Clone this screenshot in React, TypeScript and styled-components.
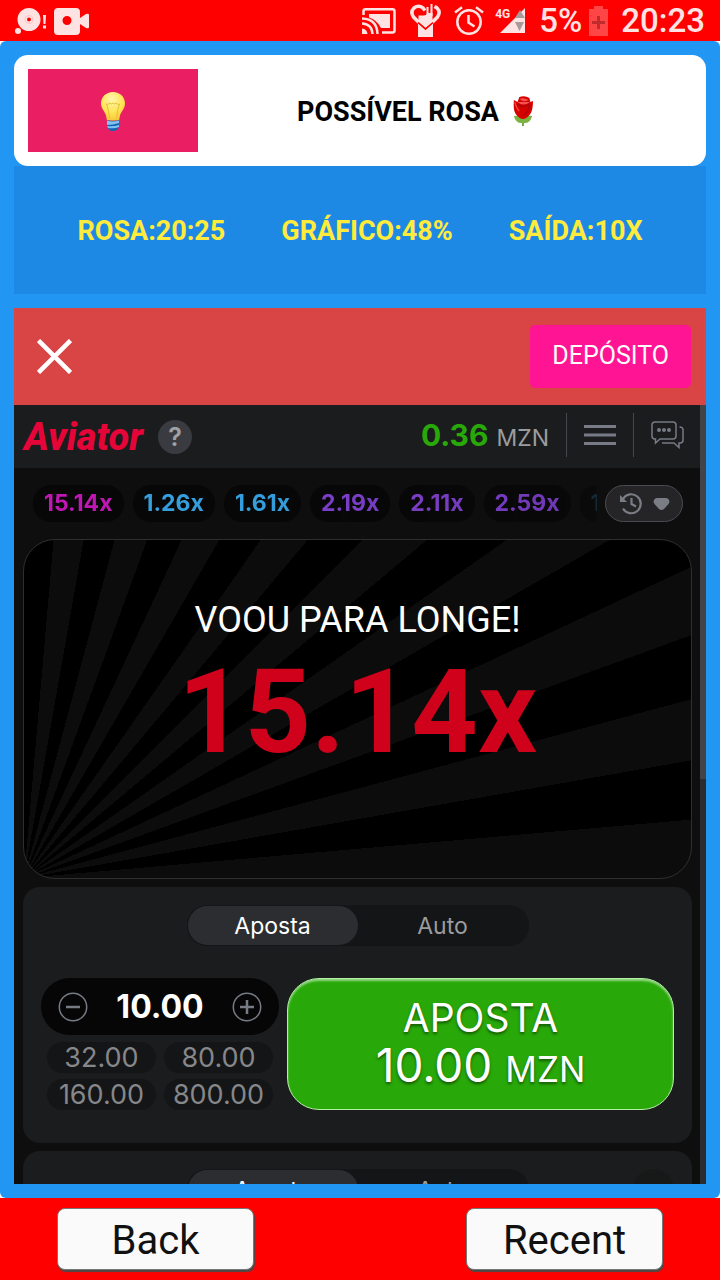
import React, { useState } from "react";
import styled, { createGlobalStyle } from "styled-components";

const GlobalStyle = createGlobalStyle`
  *, *::before, *::after { box-sizing: border-box; }
  body { margin: 0; background: #fff; font-family: Roboto, sans-serif; }
  button, input { font: inherit; color: inherit; border: 0; margin: 0; padding: 0; background: none; }
  button { cursor: pointer; }
  svg { display: block; flex: none; }
`;

const ui = "Inter, 'Noto Sans', sans-serif";

const Screen = styled.div`
  display: flex;
  flex-direction: column;
  height: 100vh;
  overflow: hidden;
`;

/* ---------- status bar ---------- */

const StatusBar = styled.header`
  flex: none;
  display: flex;
  align-items: center;
  justify-content: space-between;
  height: 41px;
  padding: 0 15px;
  background: #ff0000;
  color: #ffe3e3;
`;

const StatusGroup = styled.div<{ $gap: number }>`
  display: flex;
  align-items: center;
  gap: ${(p) => p.$gap}px;
`;

const StatusText = styled.span`
  font-size: 33px;
  line-height: 40px;
  font-weight: 500;
`;

const Signal = styled.div`
  display: flex;
  position: relative;
  padding-left: 5px;
`;

const NetworkType = styled.span`
  position: absolute;
  left: 0;
  top: 0;
  font-size: 12px;
  line-height: 12px;
  font-weight: 700;
`;

/* ---------- overlay frame ---------- */

const Frame = styled.main`
  flex: 1;
  min-height: 0;
  display: flex;
  flex-direction: column;
  padding: 14px;
  border-radius: 6px;
  background: #2196f3;
`;

const TipCard = styled.section`
  flex: none;
  display: flex;
  align-items: center;
  padding: 14px;
  border-radius: 14px;
  background: #fff;
`;

const TipBadge = styled.div`
  display: flex;
  align-items: center;
  justify-content: center;
  width: 170px;
  height: 83px;
  padding-top: 2px;
  background: #e91e63;
`;

const TipTitle = styled.h1`
  flex: 1;
  display: flex;
  align-items: center;
  justify-content: center;
  gap: 14px;
  margin: 0;
  padding: 2px 60px 0 0;
  font-size: 27px;
  line-height: 32px;
  font-weight: 700;
  color: #000;
`;

const TipStats = styled.section`
  flex: none;
  display: flex;
  align-items: center;
  justify-content: center;
  gap: 56px;
  height: 128px;
  margin-bottom: 14px;
  padding-top: 2px;
  background: #1e88e5;
  color: #ffeb3b;
  font-size: 27px;
  line-height: 32px;
  font-weight: 700;
`;

const WebView = styled.section`
  flex: 1;
  min-height: 0;
  display: flex;
  flex-direction: column;
  background: #0e0e0e;
  font-family: ${ui};
`;

const SiteHeader = styled.div`
  flex: none;
  display: flex;
  align-items: center;
  justify-content: space-between;
  height: 97px;
  padding: 0 15px 0 23px;
  background: #d94444;
  color: #fff;
`;

const IconButton = styled.button`
  display: flex;
  align-items: center;
  justify-content: center;
`;

const DepositButton = styled.button`
  height: 63px;
  padding: 0 22px 2px;
  border-radius: 5px;
  background: #ff1493;
  font-family: Roboto, sans-serif;
  font-size: 25px;
  line-height: 32px;
`;

const Scroller = styled.div`
  flex: 1;
  min-height: 0;
  display: flex;
`;

const ScrollTrack = styled.div`
  width: 6px;
  background: #2b2c2f;
`;

const ScrollThumb = styled.div`
  height: 48%;
  background: #414347;
`;

const Page = styled.div`
  flex: 1;
  min-width: 0;
  overflow: hidden;
`;

/* ---------- game navigation ---------- */

const GameNav = styled.nav`
  display: flex;
  align-items: center;
  height: 63px;
  padding: 0 16px 0 10px;
  background: #1b1c1d;
`;

const Logo = styled.span`
  display: flex;
  align-items: center;
  width: 120px;
  color: #e50539;
  font-family: Roboto, sans-serif;
  font-size: 38px;
  line-height: 48px;
  font-weight: 800;
  font-style: italic;
`;

const HelpButton = styled.button`
  width: 34px;
  height: 34px;
  margin-left: 14px;
  border-radius: 50%;
  background: #3a3b40;
  color: #a0a1a4;
  font-size: 25px;
  line-height: 34px;
  font-weight: 600;
`;

const Balance = styled.div`
  display: flex;
  align-items: baseline;
  gap: 8px;
  margin-left: auto;
  color: #9b9c9e;
  font-size: 23px;
  line-height: 36px;
`;

const BalanceValue = styled.strong`
  color: #28a909;
  font-size: 30px;
  font-weight: 700;
`;

const NavItem = styled(IconButton)`
  height: 44px;
  margin: 0 0 4px 17px;
  padding-left: 17px;
  border-left: 1px solid #46474b;
  color: #767b85;
`;

/* ---------- payout history ---------- */

const History = styled.div`
  display: flex;
  align-items: center;
  gap: 8px;
  height: 71px;
  padding: 0 17px 0 19px;
`;

const Payouts = styled.ul`
  flex: 1;
  min-width: 0;
  display: flex;
  gap: 9px;
  margin: 0;
  padding: 0;
  overflow: hidden;
  list-style: none;
  mask-image: linear-gradient(to right, #000 40%, rgba(0, 0, 0, 0.75) 94%, rgba(0, 0, 0, 0.4));
`;

const Payout = styled.li<{ $color: string }>`
  flex: none;
  padding: 0 11px;
  border-radius: 18px;
  background: #070707;
  color: ${(p) => p.$color};
  font-size: 23px;
  line-height: 37px;
  font-weight: 700;
`;

const HistoryButton = styled.button`
  flex: none;
  display: flex;
  align-items: center;
  justify-content: center;
  gap: 10px;
  width: 78px;
  height: 37px;
  border: 1px solid #4a4b50;
  border-radius: 19px;
  background: #252528;
  color: #7b7d84;
`;

/* ---------- play area ---------- */

const Stack = styled.div`
  display: flex;
  flex-direction: column;
  gap: 8px;
  padding: 0 8px 0 9px;
`;

const Stage = styled.section`
  height: 340px;
  padding-top: 59px;
  border: 1px solid #2e2e30;
  border-radius: 32px;
  background: repeating-conic-gradient(from 0deg at 0 100%, #000 0deg 5deg, #0c0c0c 5deg 10deg);
  text-align: center;
  font-family: Roboto, sans-serif;
`;

const StageTitle = styled.p`
  margin: 0;
  color: #fff;
  font-size: 36px;
  line-height: 42px;
`;

const StageValue = styled.p`
  margin: 0;
  color: #d0021b;
  font-size: 116px;
  line-height: 142px;
  font-weight: 700;
`;

const BetPanel = styled.section`
  position: relative;
  height: 256px;
  padding: 18px;
  border-radius: 17px;
  background: #1b1c1d;
`;

const Tabs = styled.div`
  display: grid;
  grid-template-columns: 1fr 1fr;
  width: 342px;
  height: 41px;
  margin: 0 auto 32px;
  padding: 1px;
  border-radius: 20px;
  background: #141516;
`;

const Tab = styled.button<{ $active: boolean }>`
  padding-top: 1px;
  border-radius: 20px;
  background: ${(p) => (p.$active ? "#2c2d30" : "transparent")};
  color: ${(p) => (p.$active ? "#fff" : "#9b9c9e")};
  font-size: 23px;
  line-height: 36px;
`;

const PanelCorner = styled.button`
  position: absolute;
  top: 18px;
  right: 18px;
  width: 41px;
  height: 41px;
  border-radius: 50%;
  background: #171818;
`;

const Controls = styled.div`
  display: flex;
  gap: 8px;
  height: 132px;
`;

const StakeColumn = styled.div`
  display: flex;
  flex-direction: column;
  gap: 7px;
  flex: 0 0 238px;
`;

const Stepper = styled.div`
  display: flex;
  align-items: center;
  justify-content: space-between;
  height: 57px;
  padding: 0 17px;
  border-radius: 29px;
  background: #060606;
  color: #767b85;
`;

const StakeInput = styled.input`
  width: 110px;
  height: 44px;
  color: #fff;
  text-align: center;
  font-size: 32px;
  line-height: 44px;
  font-weight: 700;
  outline: 0;
`;

const QuickStakes = styled.div`
  flex: 1;
  display: grid;
  grid-template-columns: 1fr 1fr;
  gap: 6px 8px;
  padding: 0 6px;
`;

const QuickStake = styled.button`
  border-radius: 16px;
  background: #141516;
  color: #86878a;
  font-size: 27px;
  line-height: 31px;
  white-space: nowrap;
`;

const BetButton = styled.button`
  flex: 1;
  display: flex;
  flex-direction: column;
  align-items: center;
  justify-content: center;
  border: 1px solid #b2f2a3;
  border-radius: 32px;
  background: #28a909;
  box-shadow: inset 0 2px 2px #ffffff80;
  color: #fff;
  font-size: 39px;
  line-height: 46px;
  text-shadow: 0 2px 3px rgba(0, 0, 0, 0.5);
`;

const BetAmount = styled.span`
  font-size: 46px;
  line-height: 48px;
`;

const BetCurrency = styled.span`
  font-size: 35px;
`;

/* ---------- bottom bar ---------- */

const BottomBar = styled.footer`
  flex: none;
  display: flex;
  align-items: center;
  justify-content: space-between;
  height: 82px;
  padding: 0 57px;
  background: #ff0000;
`;

const KeyButton = styled.button`
  width: 197px;
  height: 62px;
  padding-top: 4px;
  border: 1px solid #777;
  border-radius: 8px;
  background: #fafafa;
  box-shadow: 1px 2px 1px #4a4a4a;
  color: #111;
  font-size: 40px;
  line-height: 48px;
`;

/* ---------- drawings ---------- */

const RecordIcon = () => (
  <svg width="32" height="28" viewBox="0 0 32 28" fill="currentColor">
    <path fillRule="evenodd" d="M14 1a11.500 11.500 0 1 1 0 23 11.500 11.500 0 0 1 0-23zm0 9.500a2 2 0 1 0 0 4 2 2 0 0 0 0-4z" />
    <circle cx="14" cy="12.500" r="4" fill="none" stroke="#ffc4c4" strokeWidth="1" />
    <circle cx="3" cy="24" r="3" />
    <path d="M28 8h3l-.5 9h-2zM28 18.500h3v3h-3z" />
  </svg>
);

const CameraIcon = () => (
  <svg width="35" height="28" viewBox="0 0 35 28" fill="currentColor">
    <path
      fillRule="evenodd"
      d="M4 1h18a4 4 0 0 1 4 4v6l6-4q3-1 3 1v12q0 2-3 1l-6-4v7a4 4 0 0 1-4 4H4a4 4 0 0 1-4-4V5a4 4 0 0 1 4-4zm9 8a4.500 4.500 0 1 0 0 9 4.500 4.500 0 0 0 0-9z"
    />
  </svg>
);

const CastIcon = () => (
  <svg width="34" height="26" viewBox="0 0 34 26" fill="none" stroke="currentColor" strokeWidth="2.500">
    <path d="M1.500 7V3.200Q1.500 1.300 3.500 1.300H30.500Q32.500 1.300 32.500 3.200V22.500Q32.500 24.500 30.500 24.500H20" />
    <path d="M7 6h21v14h-9Q15 12 7 9.500z" fill="currentColor" stroke="none" />
    <path d="M0 10.500Q15 11 15.500 26M0 15.500Q10 16 10.500 26" />
    <path d="M0 20.500Q5 21 5.500 26H0z" fill="currentColor" stroke="none" />
  </svg>
);

const HeartIcon = () => (
  <svg width="31" height="34" viewBox="0 0 31 34" fill="none">
    <path d="M8 19l7.500 7L23 19v14H8z" fill="currentColor" />
    <path
      d="M9 18.500L3.500 13Q0 8 4 4Q8.500 .5 13 4L15 6.500M22 18.500L27.500 13Q31 8 27 4L24.500 2.500"
      stroke="currentColor"
      strokeWidth="3.500"
    />
    <path d="M8.500 11.500h5q3 0 4-2.500h5v9.500l-7 5.500-7-6z" fill="currentColor" />
    <path d="M8 18.500l7.500 6.500 7.500-6.500" stroke="#ff0000" strokeWidth="1.500" />
    <path d="M17.500 3v8M21.500 0v12" stroke="currentColor" strokeWidth="2" />
  </svg>
);

const AlarmIcon = () => (
  <svg width="30" height="29" viewBox="0 0 30 29" fill="none" stroke="currentColor" strokeWidth="2.500">
    <circle cx="15" cy="16" r="11.700" />
    <path d="M14.500 9v7.500l6 4M1 6.500L8 1.200M29 6.500L22 1.200" />
  </svg>
);

const SignalIcon = () => (
  <svg width="26" height="26" viewBox="0 0 26 26">
    <path d="M25 0v25H0z" fill="#ffe3e3" />
    <path d="M20 2l5 8H15zM15 14h9l-4.500 9z" fill="#a99" />
  </svg>
);

const BatteryIcon = () => (
  <svg width="19" height="30" viewBox="0 0 19 30">
    <path d="M0 3h5V0h9v3h5v27H0z" fill="#ff4545" />
    <path d="M9.500 10v13M3 16.500h13" stroke="#c22b2b" strokeWidth="3" />
  </svg>
);

const BulbIcon = () => (
  <svg width="26" height="41" viewBox="0 0 26 41">
    <defs>
      <radialGradient id="bulb" cx="45%" cy="25%" r="75%">
        <stop offset="0" stopColor="#fff6b0" />
        <stop offset="0.600" stopColor="#ffe555" />
        <stop offset="1" stopColor="#f5c938" />
      </radialGradient>
    </defs>
    <path d="M13 1C6 1 1 6 1 12.500c0 5 4 8 5 12l1 5h12l1-5c1-4 5-7 5-12C25 6 20 1 13 1z" fill="url(#bulb)" />
    <path
      d="M9.500 28Q9 19 6.500 13q2 1 3.500-1 1.500 2 3 0 1.500 2 3 0 1.500 2 3.500 1Q17 19 16.500 28"
      fill="none"
      stroke="#e9bd3a"
      strokeWidth="1"
    />
    <path d="M7 29q6 2 12 0v6q-1 5-6 5t-6-5z" fill="#1565b5" />
    <path d="M7 29.500q6 2 12 0v2.500q-6 2-12 2zM7 35q6 1 12-1v2q-5 2-11 1z" fill="#83c3f0" />
  </svg>
);

const RoseIcon = () => (
  <svg width="20" height="31" viewBox="2 0 22 31" preserveAspectRatio="none">
    <path d="M12 20h2v10h-2z" fill="#689f38" />
    <path d="M13 27Q5 28 3 20q7-1 10 3 3-4 10-3-2 8-10 7z" fill="#7cb342" />
    <path d="M3 4l4 2 2-5q6-2 11 1l1 4 3-1q0 9-3 13-4 5-8 5t-8-5Q2 14 3 4z" fill="#d50000" />
    <path d="M7 6q6 5 14 0M9 3q5-2 10 1-5 3-10-1z" fill="#f8524f" />
    <path d="M7 8q6 5 13 0M20 8q-1 9-7 12" fill="none" stroke="#a80808" strokeWidth="1.300" />
    <path d="M4 6q2 7 5 9" fill="none" stroke="#f44336" strokeWidth="1.500" />
  </svg>
);

const CloseIcon = () => (
  <svg width="35" height="35" viewBox="0 0 35 35" stroke="currentColor" strokeWidth="4.500">
    <path d="M1.500 1.500l32 32M33.500 1.500l-32 32" />
  </svg>
);

const MenuIcon = () => (
  <svg width="32" height="22" viewBox="0 0 32 22" fill="currentColor">
    <path d="M0 1h32v3H0zM0 9.500h32v3H0zM0 18h32v3H0z" />
  </svg>
);

const ChatIcon = () => (
  <svg width="33" height="28" viewBox="0 0 33 28" fill="none" stroke="currentColor" strokeWidth="1.500">
    <path d="M4 1h18q3 0 3 3v11q0 3-3 3H9l-4.500 4v-4H4q-3 0-3-3V4q0-3 3-3z" />
    <path d="M28.500 6q3.500 0 3.500 3v10q0 3-3 3h-1v4.500L23 22H11" />
    <path d="M8 9h0M13 9h0M18 9h0" strokeWidth="4" strokeLinecap="round" />
  </svg>
);

const HistoryIcon = () => (
  <svg width="24" height="23" viewBox="0 0 24 23" fill="none" stroke="currentColor" strokeWidth="2.200">
    <path d="M4 7A9.500 9.500 0 1 1 4 16.500M12.500 6v6l4.500 2.500" />
    <path d="M1 3v7h7z" fill="currentColor" stroke="none" />
  </svg>
);

const DropIcon = () => (
  <svg width="17" height="14" viewBox="0 0 17 14" fill="currentColor">
    <path d="M4 1h9q2 0 3 2 1 2-.5 4L11 12q-2.500 2-5 0L1.500 7Q0 5 1 3t3-2z" />
  </svg>
);

const StepIcon = ({ plus }: { plus?: boolean }) => (
  <svg width="30" height="30" viewBox="0 0 30 30" fill="none" stroke="currentColor">
    <circle cx="15" cy="15" r="13.700" strokeWidth="1.500" />
    <path d={plus ? "M8 15h14M15 8v14" : "M8 15h14"} strokeWidth="2.500" />
  </svg>
);

/* ---------- composition ---------- */

const payouts = [
  { value: "15.14x", color: "#c017b4" },
  { value: "1.26x", color: "#349fdc" },
  { value: "1.61x", color: "#349fdc" },
  { value: "2.19x", color: "#8242d6" },
  { value: "2.11x", color: "#8a44e0" },
  { value: "2.59x", color: "#8f46ea" },
  { value: "1", color: "#1f4f69" },
];

const quickStakes = ["32.00", "80.00", "160.00", "800.00"];

function BetForm({ corner }: { corner?: boolean }) {
  const [stake, setStake] = useState("10.00");
  const [auto, setAuto] = useState(false);
  const step = (by: number) => setStake(Math.max(1, (parseFloat(stake) || 0) + by).toFixed(2));

  return (
    <BetPanel>
      <Tabs role="tablist">
        <Tab role="tab" aria-selected={!auto} $active={!auto} onClick={() => setAuto(false)}>
          Aposta
        </Tab>
        <Tab role="tab" aria-selected={auto} $active={auto} onClick={() => setAuto(true)}>
          Auto
        </Tab>
      </Tabs>
      {corner && <PanelCorner aria-label="Remover" />}
      <Controls>
        <StakeColumn>
          <Stepper>
            <IconButton aria-label="Diminuir" onClick={() => step(-1)}>
              <StepIcon />
            </IconButton>
            <StakeInput aria-label="Valor" value={stake} onChange={(e) => setStake(e.target.value)} />
            <IconButton aria-label="Aumentar" onClick={() => step(1)}>
              <StepIcon plus />
            </IconButton>
          </Stepper>
          <QuickStakes>
            {quickStakes.map((q) => (
              <QuickStake key={q} onClick={() => setStake(q)}>
                {q}
              </QuickStake>
            ))}
          </QuickStakes>
        </StakeColumn>
        <BetButton>
          <span>APOSTA</span>
          <BetAmount>
            {stake} <BetCurrency>MZN</BetCurrency>
          </BetAmount>
        </BetButton>
      </Controls>
    </BetPanel>
  );
}

export default function App() {
  return (
    <Screen>
      <GlobalStyle />
      <StatusBar>
        <StatusGroup $gap={7}>
          <RecordIcon />
          <CameraIcon />
        </StatusGroup>
        <StatusGroup $gap={13}>
          <StatusGroup $gap={14}>
            <CastIcon />
            <HeartIcon />
          </StatusGroup>
          <StatusGroup $gap={11}>
            <AlarmIcon />
            <Signal>
              <NetworkType>4G</NetworkType>
              <SignalIcon />
            </Signal>
          </StatusGroup>
          <StatusGroup $gap={7}>
            <StatusText>5%</StatusText>
            <BatteryIcon />
          </StatusGroup>
          <StatusText>20:23</StatusText>
        </StatusGroup>
      </StatusBar>

      <Frame>
        <TipCard>
          <TipBadge>
            <BulbIcon />
          </TipBadge>
          <TipTitle>
            POSSÍVEL ROSA <RoseIcon />
          </TipTitle>
        </TipCard>
        <TipStats>
          <span>ROSA:20:25</span>
          <span>GRÁFICO:48%</span>
          <span>SAÍDA:10X</span>
        </TipStats>

        <WebView>
          <SiteHeader>
            <IconButton aria-label="Fechar">
              <CloseIcon />
            </IconButton>
            <DepositButton>DEPÓSITO</DepositButton>
          </SiteHeader>
          <Scroller>
            <Page>
              <GameNav>
                <Logo>Aviator</Logo>
                <HelpButton>?</HelpButton>
                <Balance>
                  <BalanceValue>0.36</BalanceValue>
                  <span>MZN</span>
                </Balance>
                <NavItem aria-label="Menu">
                  <MenuIcon />
                </NavItem>
                <NavItem aria-label="Chat">
                  <ChatIcon />
                </NavItem>
              </GameNav>

              <History>
                <Payouts>
                  {payouts.map((p) => (
                    <Payout key={p.value} $color={p.color}>
                      {p.value}
                    </Payout>
                  ))}
                </Payouts>
                <HistoryButton aria-label="Histórico">
                  <HistoryIcon />
                  <DropIcon />
                </HistoryButton>
              </History>

              <Stack>
                <Stage>
                  <StageTitle>VOOU PARA LONGE!</StageTitle>
                  <StageValue>15.14x</StageValue>
                </Stage>
                <BetForm />
                <BetForm corner />
              </Stack>
            </Page>
            <ScrollTrack>
              <ScrollThumb />
            </ScrollTrack>
          </Scroller>
        </WebView>
      </Frame>

      <BottomBar>
        <KeyButton>Back</KeyButton>
        <KeyButton>Recent</KeyButton>
      </BottomBar>
    </Screen>
  );
}
